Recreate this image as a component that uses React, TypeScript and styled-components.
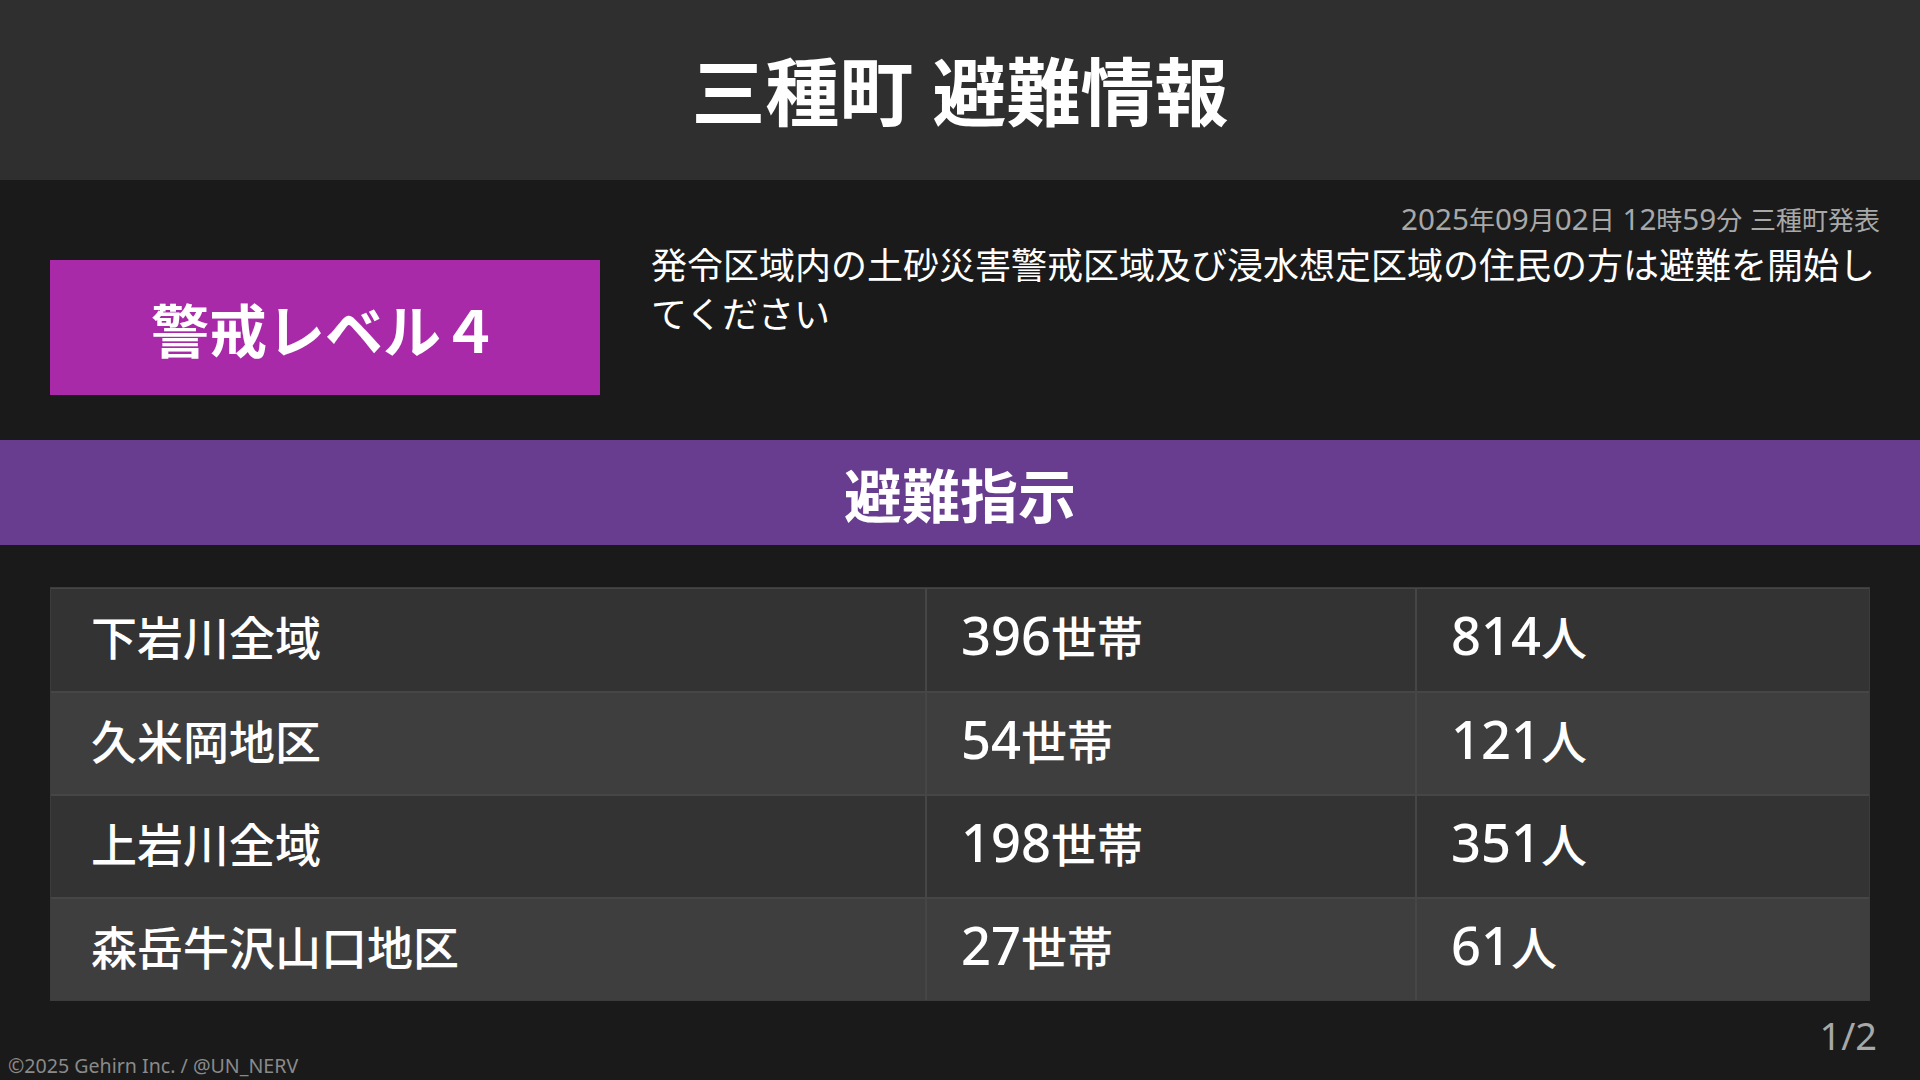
import React from "react";
import styled, { createGlobalStyle } from "styled-components";

const GlobalStyle = createGlobalStyle`
  html, body {
    margin: 0;
    padding: 0;
    background: #1a1a1a;
  }
  body {
    font-family: "Noto Sans", "Noto Sans CJK JP", sans-serif;
    color: #ffffff;
  }
  * { box-sizing: border-box; }
`;

const Page = styled.div`
  position: relative;
  width: 1920px;
  height: 1080px;
  overflow: hidden;
  background: #1a1a1a;
  display: flex;
  flex-direction: column;
`;

const Header = styled.header`
  height: 180px;
  background: #2f2f2f;
  display: flex;
  align-items: center;
  justify-content: center;
  padding-top: 3px;
`;

const Title = styled.h1`
  margin: 0;
  font-size: 74px;
  font-weight: 700;
  line-height: 1;
  color: #ffffff;
`;

const InfoSection = styled.section`
  height: 260px;
  display: flex;
  align-items: flex-start;
  gap: 51px;
  padding: 0 40px 0 50px;
`;

const LevelBadge = styled.div`
  flex: 0 0 550px;
  height: 135px;
  margin-top: 80px;
  background: #a92aa9;
  display: flex;
  align-items: center;
  justify-content: center;
  font-family: "Noto Sans CJK JP", sans-serif;
  font-size: 58px;
  font-weight: 700;
  color: #ffffff;
`;

const InfoBody = styled.div`
  flex: 1;
  display: flex;
  flex-direction: column;
  padding-top: 23px;
`;

const Issued = styled.div`
  text-align: right;
  font-size: 26px;
  line-height: 34px;
  color: #a8a8a8;
`;

const Num = styled.span`
  font-size: 1.14em;
  line-height: 0;
`;

const Message = styled.p`
  margin: 4px 0 0 0;
  font-size: 36px;
  line-height: 49px;
  color: #ffffff;
`;

const SectionBand = styled.div`
  height: 105px;
  background: #683c8e;
  display: flex;
  align-items: center;
  justify-content: center;
  font-size: 58px;
  font-weight: 700;
  color: #ffffff;
`;

const Table = styled.div`
  margin: 42px 50px 0 50px;
  border: 1px solid #3c3c3c;
  display: flex;
  flex-direction: column;
`;

const Row = styled.div<{ $alt: boolean; $first: boolean }>`
  display: grid;
  grid-template-columns: 876px 490px 1fr;
  height: 103px;
  background: ${(p) => (p.$alt ? "#3e3e3e" : "#333333")};
  border-top: ${(p) => (p.$first ? "1px" : "2px")} solid #464646;
`;

const Cell = styled.div<{ $last?: boolean; $lead?: boolean }>`
  display: flex;
  align-items: center;
  padding-left: ${(p) => (p.$lead ? "40px" : "34px")};
  padding-bottom: 6px;
  font-size: 46px;
  font-weight: 500;
  color: #ffffff;
  border-right: ${(p) => (p.$last ? "none" : "2px solid #464646")};
`;

const CellText = styled.span`
  line-height: 1;
`;

const Pager = styled.div`
  margin-top: 8px;
  padding-right: 43px;
  text-align: right;
  font-size: 38px;
  line-height: 52px;
  color: #a8a8a8;
`;

const Credit = styled.div`
  position: absolute;
  left: 8px;
  bottom: 1px;
  font-size: 19.6px;
  line-height: 26px;
  color: #8a8a8a;
`;

type Area = { name: string; households: number; people: number };

const areas: Area[] = [
  { name: "下岩川全域", households: 396, people: 814 },
  { name: "久米岡地区", households: 54, people: 121 },
  { name: "上岩川全域", households: 198, people: 351 },
  { name: "森岳牛沢山口地区", households: 27, people: 61 },
];

export default function App() {
  return (
    <>
      <GlobalStyle />
      <Page>
        <Header>
          <Title>三種町 避難情報</Title>
        </Header>
        <InfoSection>
          <LevelBadge>警戒レベル４</LevelBadge>
          <InfoBody>
            <Issued>
              <Num>2025</Num>年<Num>09</Num>月<Num>02</Num>日<Num> 12</Num>時
              <Num>59</Num>分<Num> </Num>三種町発表
            </Issued>
            <Message>
              発令区域内の土砂災害警戒区域及び浸水想定区域の住民の方は避難を開始してください
            </Message>
          </InfoBody>
        </InfoSection>
        <SectionBand>避難指示</SectionBand>
        <Table>
          {areas.map((a, i) => (
            <Row key={a.name} $alt={i % 2 === 1} $first={i === 0}>
              <Cell $lead>
                <CellText>{a.name}</CellText>
              </Cell>
              <Cell>
                <CellText>
                  <Num>{a.households}</Num>世帯
                </CellText>
              </Cell>
              <Cell $last>
                <CellText>
                  <Num>{a.people}</Num>人
                </CellText>
              </Cell>
            </Row>
          ))}
        </Table>
        <Pager>1/2</Pager>
        <Credit>©2025 Gehirn Inc. / @UN_NERV</Credit>
      </Page>
    </>
  );
}
